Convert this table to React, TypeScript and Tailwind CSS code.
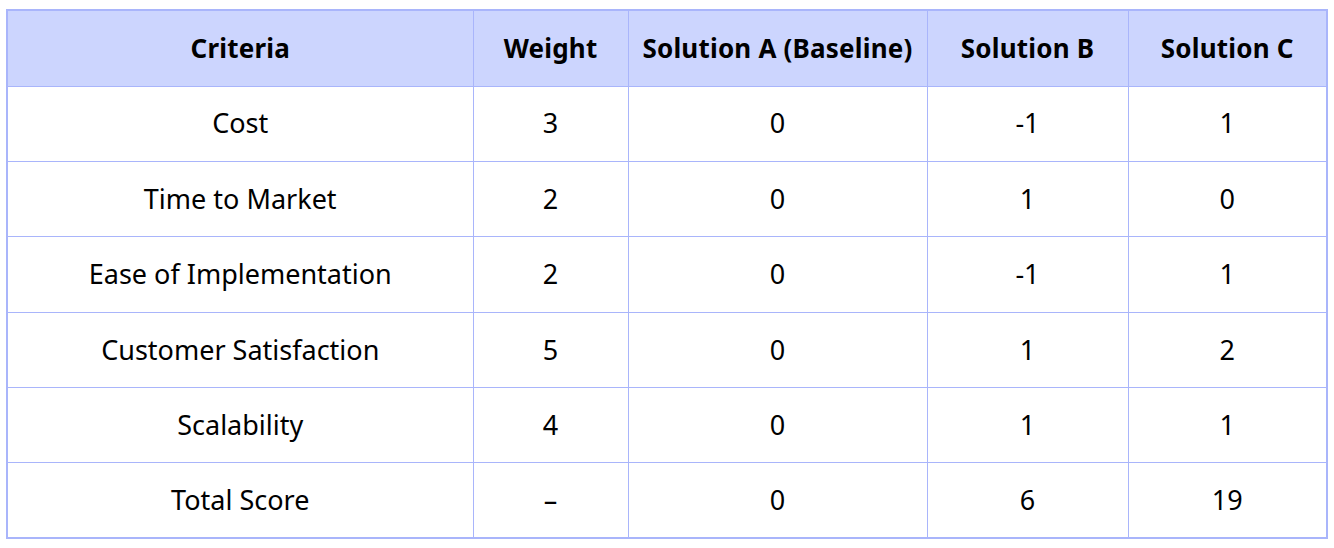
import React from 'react';

const rows = [
  ['Cost', '3', '0', '-1', '1'],
  ['Time to Market', '2', '0', '1', '0'],
  ['Ease of Implementation', '2', '0', '-1', '1'],
  ['Customer Satisfaction', '5', '0', '1', '2'],
  ['Scalability', '4', '0', '1', '1'],
  ['Total Score', '–', '0', '6', '19'],
];

const headers = ['Criteria', 'Weight', 'Solution A (Baseline)', 'Solution B', 'Solution C'];
const widths = ['w-[466px]', 'w-[155px]', 'w-[299px]', 'w-[201px]', 'w-[199px]'];

export default function App() {
  return (
    <div className="w-[1334px] h-[548px] bg-white pl-[6px] pt-[9px]" style={{ fontFamily: '"Noto Sans", Inter, sans-serif' }}>
      <table className="border-collapse border-2 border-[#a9b5fb] table-fixed text-black">
        <thead>
          <tr className="h-[76px] bg-[#ccd5fe]">
            {headers.map((h, i) => (
              <th key={h} className={`${widths[i]} border border-[#a9b5fb] text-center text-[26px] font-bold tracking-[0.2px] whitespace-nowrap`}>
                {h}
              </th>
            ))}
          </tr>
        </thead>
        <tbody>
          {rows.map((r) => (
            <tr key={r[0]} className="h-[75.4px]">
              {r.map((c, j) => (
                <td key={j} className="border border-[#a9b5fb] text-center text-[27px] font-normal">
                  {c}
                </td>
              ))}
            </tr>
          ))}
        </tbody>
      </table>
    </div>
  );
}
